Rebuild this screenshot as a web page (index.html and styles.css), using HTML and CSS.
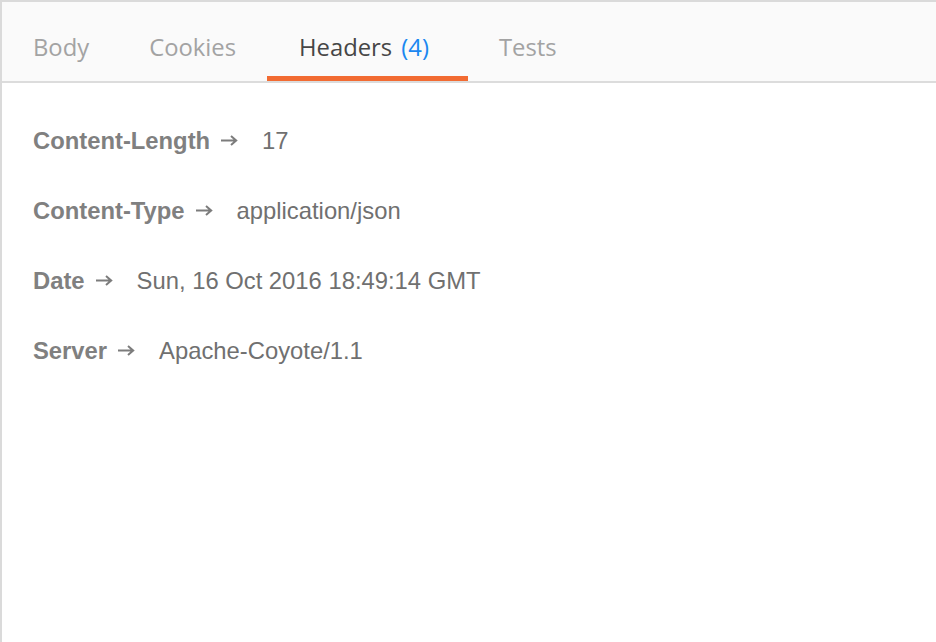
FILE: index.html
```html
<!DOCTYPE html>
<html>
<head>
<meta charset="utf-8">
<link rel="stylesheet" href="styles.css">
</head>
<body>
<div class="panel">
  <div class="tabs">
    <div class="tab">Body</div>
    <div class="tab">Cookies</div>
    <div class="tab active">Headers <span class="count">(4)</span></div>
    <div class="tab">Tests</div>
  </div>
  <div class="headers">
    <div class="row"><span class="key">Content-Length</span><svg class="arrow" viewBox="0 0 17 11" width="17" height="11"><path d="M0 5.5H15M10 1L15.2 5.5L10 10" fill="none" stroke="currentColor" stroke-width="2"/></svg><span class="val">17</span></div>
    <div class="row"><span class="key">Content-Type</span><svg class="arrow" viewBox="0 0 17 11" width="17" height="11"><path d="M0 5.5H15M10 1L15.2 5.5L10 10" fill="none" stroke="currentColor" stroke-width="2"/></svg><span class="val">application/json</span></div>
    <div class="row"><span class="key">Date</span><svg class="arrow" viewBox="0 0 17 11" width="17" height="11"><path d="M0 5.5H15M10 1L15.2 5.5L10 10" fill="none" stroke="currentColor" stroke-width="2"/></svg><span class="val">Sun, 16 Oct 2016 18:49:14 GMT</span></div>
    <div class="row"><span class="key">Server</span><svg class="arrow" viewBox="0 0 17 11" width="17" height="11"><path d="M0 5.5H15M10 1L15.2 5.5L10 10" fill="none" stroke="currentColor" stroke-width="2"/></svg><span class="val">Apache-Coyote/1.1</span></div>
  </div>
</div>
</body>
</html>
```
FILE: styles.css
```css
html, body {
  margin: 0;
  padding: 0;
  background: #ffffff;
}
.panel {
  height: 642px;
  box-sizing: border-box;
  border-top: 2px solid #dadada;
  border-left: 2px solid #dadada;
  background: #ffffff;
}
.tabs {
  display: flex;
  background: #fafafa;
  border-bottom: 2px solid #dcdcdc;
}
.tab {
  font-family: "Open Sans", sans-serif;
  font-size: 23.8px;
  line-height: 32px;
  color: #a3a3a3;
  padding: 29px 31px 13px 31px;
  border-bottom: 5px solid transparent;
  white-space: nowrap;
}
.tab:nth-child(2) {
  padding-left: 29px;
}
.tab.active {
  color: #464646;
  border-bottom-color: #f26b32;
  padding-left: 32px;
  padding-right: 39px;
}
.count {
  color: #1b87f0;
  margin-left: 3px;
}
.headers {
  padding: 23px 0 0 31px;
  font-family: "Liberation Sans", Arial, sans-serif;
  font-size: 23.8px;
}
.row {
  height: 70px;
  line-height: 70px;
  white-space: nowrap;
}
.key {
  font-weight: bold;
  color: #808080;
}
.arrow {
  color: #7c7c7c;
  vertical-align: 3px;
  margin-left: 11px;
  margin-right: 24px;
}
.val {
  color: #707070;
}
```
